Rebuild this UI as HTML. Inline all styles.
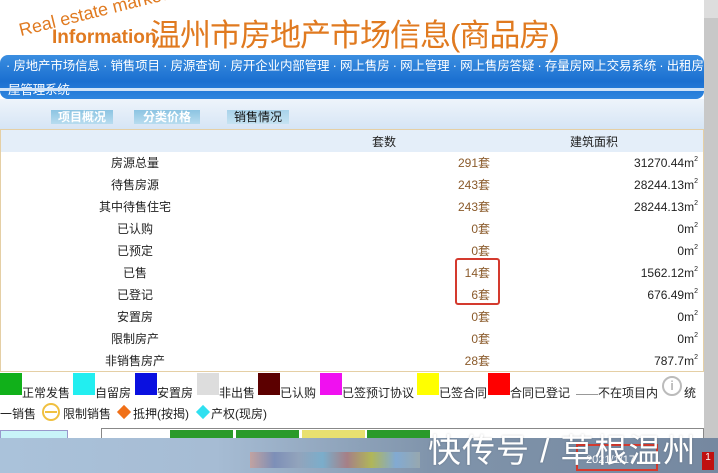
<!DOCTYPE html>
<html><head><meta charset="utf-8"><style>
*{margin:0;padding:0;box-sizing:border-box}
body{width:718px;height:473px;overflow:hidden;background:#fff;font-family:"Liberation Sans","Noto Sans CJK SC",sans-serif;position:relative;font-size:12px}
.abs{position:absolute}
.row{position:absolute;left:0;width:704px;height:22px;font-size:12px;color:#222;line-height:16px}
.row .l{position:absolute;left:0;width:270px;text-align:center;top:3px}
.row .m{position:absolute;right:214px;top:3px;color:#8a5a2a}
.row .r{position:absolute;right:6px;top:3px;color:#222}
sup{font-size:7px;line-height:0;vertical-align:6px}
.sw{position:absolute;top:373px;width:22px;height:22px}
.lg{position:absolute;top:384px;font-size:12px;color:#222}
</style></head><body>
<div class="abs" style="left:22px;top:20px;font-size:18px;color:#e07a20;transform:rotate(-14deg);transform-origin:left bottom;white-space:nowrap">Real estate market</div>
<div class="abs" style="left:52px;top:27px;font-size:19px;font-weight:bold;color:#e07a20">Information</div>
<div class="abs" style="left:150px;top:10px;font-size:31px;color:#e07a20;letter-spacing:-1px">温州市房地产市场信息(商品房)</div>
<div class="abs" style="left:0;top:55px;width:704px;height:44px;background:linear-gradient(#3b8ee0,#1a6fd0 60%,#2f86df);border-radius:8px"></div>
<div class="abs" style="left:6px;top:57px;width:700px;color:#fff;font-size:12.5px;line-height:19px;white-space:nowrap;letter-spacing:-0.15px">· 房地产市场信息 · 销售项目 · 房源查询 · 房开企业内部管理 · 网上售房 · 网上管理 · 网上售房答疑 · 存量房网上交易系统 · 出租房</div>
<div class="abs" style="left:8px;top:79px;color:#fff;font-size:12.5px;letter-spacing:-0.15px">屋管理系统</div>
<div class="abs" style="left:0;top:88px;width:704px;height:3px;background:#cfe3f8"></div>
<div class="abs" style="left:0;top:99px;width:704px;height:30px;background:linear-gradient(#eef4fb,#d6e5f5)"></div>
<div class="abs" style="left:51px;top:110px;width:62px;height:14px;background:linear-gradient(#8cc4e2,#b8dcef);color:#fff;font-weight:bold;text-align:center;font-size:12px;line-height:14px">项目概况</div>
<div class="abs" style="left:134px;top:110px;width:66px;height:14px;background:linear-gradient(#8cc4e2,#b8dcef);color:#fff;font-weight:bold;text-align:center;font-size:12px;line-height:14px">分类价格</div>
<div class="abs" style="left:227px;top:110px;width:62px;height:14px;background:linear-gradient(#a8d2ea,#c6e3f2);color:#111;text-align:center;font-size:12px;line-height:14px">销售情况</div>
<div class="abs" style="left:0;top:129px;width:704px;height:243px;border:1px solid #e5cfa5"></div>
<div class="abs" style="left:1px;top:130px;width:702px;height:22px;background:#e4eef9"></div>
<div class="abs" style="left:372px;top:133px;color:#222">套数</div>
<div class="abs" style="left:570px;top:133px;color:#222">建筑面积</div>
<div class="row" style="top:152px"><span class="l">房源总量</span><span class="m">291套</span><span class="r">31270.44m<sup>2</sup></span></div>
<div class="row" style="top:174px"><span class="l">待售房源</span><span class="m">243套</span><span class="r">28244.13m<sup>2</sup></span></div>
<div class="row" style="top:196px"><span class="l">其中待售住宅</span><span class="m">243套</span><span class="r">28244.13m<sup>2</sup></span></div>
<div class="row" style="top:218px"><span class="l">已认购</span><span class="m">0套</span><span class="r">0m<sup>2</sup></span></div>
<div class="row" style="top:240px"><span class="l">已预定</span><span class="m">0套</span><span class="r">0m<sup>2</sup></span></div>
<div class="row" style="top:262px"><span class="l">已售</span><span class="m">14套</span><span class="r">1562.12m<sup>2</sup></span></div>
<div class="row" style="top:284px"><span class="l">已登记</span><span class="m">6套</span><span class="r">676.49m<sup>2</sup></span></div>
<div class="row" style="top:306px"><span class="l">安置房</span><span class="m">0套</span><span class="r">0m<sup>2</sup></span></div>
<div class="row" style="top:328px"><span class="l">限制房产</span><span class="m">0套</span><span class="r">0m<sup>2</sup></span></div>
<div class="row" style="top:350px"><span class="l">非销售房产</span><span class="m">28套</span><span class="r">787.7m<sup>2</sup></span></div>
<div class="abs" style="left:455px;top:258px;width:45px;height:47px;border:2px solid #d43a2e;border-radius:3px"></div>
<div class="sw" style="left:0;background:#11b01a"></div><div class="lg" style="left:22px">正常发售</div>
<div class="sw" style="left:73px;background:#22eef0"></div><div class="lg" style="left:95px">自留房</div>
<div class="sw" style="left:135px;background:#0a10e0"></div><div class="lg" style="left:157px">安置房</div>
<div class="sw" style="left:197px;background:#ddd"></div><div class="lg" style="left:219px">非出售</div>
<div class="sw" style="left:258px;background:#5c0000"></div><div class="lg" style="left:280px">已认购</div>
<div class="sw" style="left:320px;background:#f010f0"></div><div class="lg" style="left:342px">已签预订协议</div>
<div class="sw" style="left:417px;background:#ffff00"></div><div class="lg" style="left:439px">已签合同</div>
<div class="sw" style="left:488px;background:#f00"></div><div class="lg" style="left:510px">合同已登记</div>
<div class="sw" style="left:576px;top:394px;height:1px;background:#999"></div><div class="lg" style="left:598px">不在项目内</div>
<div class="abs" style="left:662px;top:376px;width:20px;height:20px;border:2px solid #bbb;border-radius:50%;color:#bbb;text-align:center;font-weight:bold;font-size:13px;line-height:16px">i</div>
<div class="lg" style="left:684px">统</div>
<div class="abs" style="top:405px;left:0;font-size:12px;color:#222">一销售</div>
<div class="abs" style="left:42px;top:403px;width:18px;height:18px;border:2px solid #f0c040;border-radius:50%"><div style="margin:6px 1px;height:2px;background:#f0c040"></div></div>
<div class="abs" style="top:405px;left:63px;color:#222">限制销售</div>
<div class="abs" style="left:119px;top:407px;width:10px;height:10px;background:#f07018;transform:rotate(45deg)"></div>
<div class="abs" style="top:405px;left:133px;color:#222">抵押(按揭)</div>
<div class="abs" style="left:198px;top:407px;width:10px;height:10px;background:#30e0f0;transform:rotate(45deg)"></div>
<div class="abs" style="top:405px;left:211px;color:#222">产权(现房)</div>
<div class="abs" style="left:0;top:430px;width:68px;height:10px;background:#c8f4f8;border:1px solid #99c"></div>
<div class="abs" style="left:101px;top:428px;width:603px;height:12px;border:1px solid #888;background:#fff"></div>
<div class="abs" style="left:170px;top:430px;width:63px;height:10px;background:#2a9a2a"></div>
<div class="abs" style="left:236px;top:430px;width:63px;height:10px;background:#2a9a2a"></div>
<div class="abs" style="left:302px;top:430px;width:63px;height:10px;background:#e8e070"></div>
<div class="abs" style="left:367px;top:430px;width:63px;height:10px;background:#2a9a2a"></div>
<div class="abs" style="left:704px;top:0;width:14px;height:438px;background:#ddd"></div>
<div class="abs" style="left:704px;top:18px;width:14px;height:420px;background:#c8c8c8"></div>
<div class="abs" style="left:0;top:438px;width:718px;height:35px;background:linear-gradient(90deg,#aac2da,#a6bcd4 30%,#8094ab 60%,#7588a0)"></div>
<div class="abs" style="left:250px;top:452px;width:170px;height:16px;background:linear-gradient(90deg,#d09a8e,#7080b0,#90a0b8,#70b0d0,#b07070,#c0c030,#80b0e0,#a0b0b0);opacity:.7"></div>
<div class="abs" style="left:576px;top:444px;width:82px;height:27px;border:2px solid #d43a2e"></div>
<div class="abs" style="left:586px;top:454px;color:#fff;font-size:11px">2021/1/17</div>
<div class="abs" style="left:702px;top:452px;width:12px;height:18px;background:#c01010;color:#fff;font-size:10px;text-align:center">1</div>
<div class="abs" style="left:428px;top:424px;color:#fff;font-size:33px;letter-spacing:1px;text-shadow:0 0 2px rgba(0,0,0,.2)">快传号 / 草根温州</div>
</body></html>
